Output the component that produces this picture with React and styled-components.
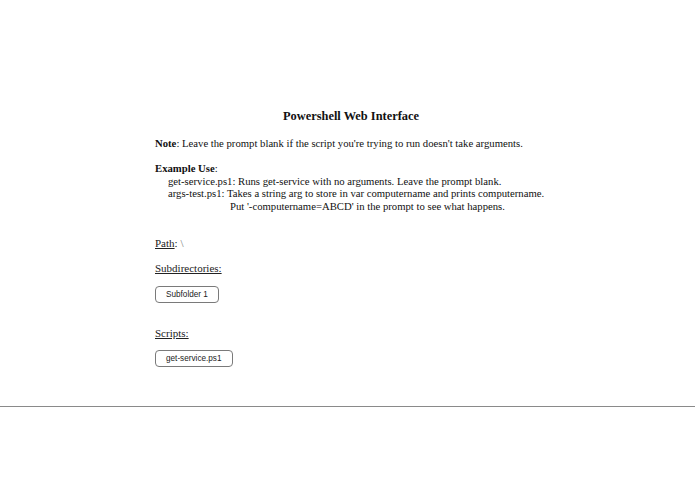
import React from "react";
import styled, { createGlobalStyle } from "styled-components";

const GlobalStyle = createGlobalStyle`
  html, body {
    margin: 0;
    padding: 0;
    background: #ffffff;
  }
  body {
    font-family: "Liberation Serif", "Times New Roman", serif;
    color: #111111;
  }
`;

const Page = styled.div`
  width: 695px;
  min-height: 494px;
  padding-top: 109px;
  box-sizing: border-box;
`;

const Container = styled.main`
  width: 392px;
  margin-left: 155px;
  font-size: 10.7px;
  line-height: 12.5px;
`;

const Title = styled.h1`
  margin: 0 0 13px;
  text-align: center;
  font-size: 12.4px;
  line-height: 15px;
  font-weight: bold;
`;

const Para = styled.p`
  margin: 0 0 12.5px;
  white-space: nowrap;
`;

const ExampleLine = styled.div`
  padding-left: ${(p) => p.$indent}px;
  white-space: nowrap;
`;

const Label = styled.span`
  text-decoration: underline;
  color: #222;
`;

const PathValue = styled.span`
  color: #777;
`;

const Section = styled.div`
  margin-top: ${(p) => p.$top}px;
`;

const Heading = styled.div`
  margin-bottom: ${(p) => p.$gap ?? 12.5}px;
  font-size: 11px;
  line-height: 12.5px;
`;

const FileButton = styled.button`
  display: block;
  font-family: "Liberation Sans", Arial, sans-serif;
  font-size: 8.2px;
  color: #222;
  background: #ffffff;
  border: 1px solid #7a7a7a;
  border-radius: 4px;
  height: 17px;
  padding: 0 10px;
  cursor: pointer;
`;

const Rule = styled.hr`
  margin: 39px 0 0;
  border: none;
  border-top: 1px solid #8a8a8a;
`;

export default function App() {
  return (
    <Page>
      <GlobalStyle />
      <Container>
        <Title>Powershell Web Interface</Title>
        <Para>
          <b>Note</b>: Leave the prompt blank if the script you're trying to run doesn't take arguments.
        </Para>
        <div>
          <b>Example Use</b>:
        </div>
        <ExampleLine $indent={13}>
          get-service.ps1: Runs get-service with no arguments. Leave the prompt blank.
        </ExampleLine>
        <ExampleLine $indent={13}>
          args-test.ps1: Takes a string arg to store in var computername and prints computername.
        </ExampleLine>
        <ExampleLine $indent={75}>
          Put '-computername=ABCD' in the prompt to see what happens.
        </ExampleLine>

        <Section $top={25}>
          <Heading>
            <Label>Path</Label>: <PathValue>\</PathValue>
          </Heading>
          <Heading $gap={11}>
            <Label>Subdirectories:</Label>
          </Heading>
          <FileButton>Subfolder 1</FileButton>
        </Section>

        <Section $top={24}>
          <Heading $gap={11}>
            <Label>Scripts:</Label>
          </Heading>
          <FileButton>get-service.ps1</FileButton>
        </Section>
      </Container>
      <Rule />
    </Page>
  );
}
